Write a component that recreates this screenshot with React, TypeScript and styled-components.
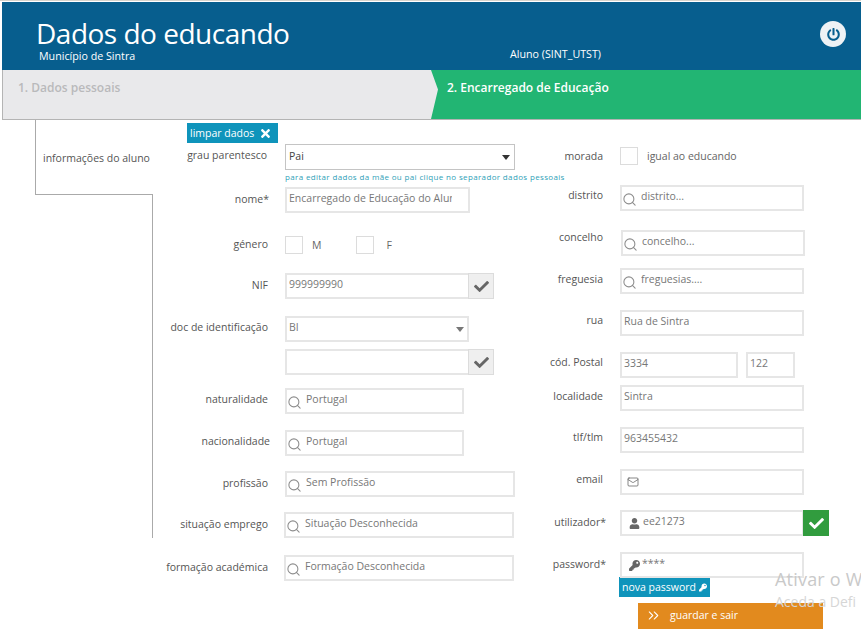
import { createGlobalStyle, styled } from 'styled-components';
import { ChevronsRight, Mail, Search } from 'lucide-react';
import { FaCheck, FaKey, FaPowerOff, FaTimes, FaUser } from 'react-icons/fa';

const Globalstyle = createGlobalStyle`
  html, body {
    margin: 0;
    padding: 0;
    height: 636px;
    overflow: hidden;
    background: #fff;
    font-family: "Open Sans", "Liberation Sans", sans-serif;
  }
  * { box-sizing: border-box; }
`;

const Page = styled.main`
  position: relative;
  width: 861px;
  height: 636px;
  overflow: hidden;
  padding: 1px 0 0 2px;
  border-top: 1px solid #d8d4cc;
`;

const Header = styled.header`
  display: flex;
  height: 68px;
  padding-left: 34px;
  background: #075e8e;
  color: #fff;
`;

const TitleBlock = styled.div`
  width: 474px;
  padding-top: 15px;
`;

const Title = styled.h1`
  margin: 0;
  font-size: 28px;
  line-height: 32px;
  font-weight: 400;
  letter-spacing: -0.5px;
`;

const Subtitle = styled.div`
  margin-left: 3px;
  font-size: 10.7px;
  line-height: 14px;
`;

const UserName = styled.div`
  align-self: flex-end;
  padding-bottom: 9px;
  font-size: 10.7px;
  line-height: 14px;
`;

const PowerButton = styled.button`
  display: flex;
  align-items: center;
  justify-content: center;
  align-self: center;
  width: 26px;
  height: 26px;
  margin: 0 15px 4px auto;
  padding: 0;
  border: none;
  border-radius: 50%;
  background: #eef2f5;
  color: #075e8e;
  font-size: 13px;
`;

const Tabs = styled.nav`
  display: flex;
  height: 50px;
  border-bottom: 1px solid #b4b4b4;
`;

const TabPessoais = styled.div`
  width: 436px;
  padding: 9px 0 0 15px;
  background: #e9e9eb;
  border-left: 1px solid #b4b4b4;
  color: #b9b9bb;
  font-size: 12px;
  line-height: 17px;
  font-weight: 600;
`;

const TabEducacao = styled.div`
  flex: 1;
  margin-left: -7px;
  padding: 9px 0 0 16px;
  background: #22b573;
  color: #fff;
  font-size: 12px;
  line-height: 17px;
  font-weight: 600;
  clip-path: polygon(0 0, 100% 0, 100% 100%, 0 100%, 7px 40%);
`;

const Content = styled.div`
  display: flex;
`;

const Sidebar = styled.aside`
  flex: none;
  width: 151px;
`;

const SideTop = styled.div`
  height: 75px;
  margin-left: 33px;
  padding: 31px 0 0 7px;
  border-left: 1px solid #aaa;
  border-bottom: 1px solid #aaa;
  color: #555;
  font-size: 10.5px;
  line-height: 15px;
  white-space: nowrap;
`;

const SideLine = styled.div`
  height: 343px;
  border-right: 1px solid #aaa;
`;

const Column = styled.section<{ $width: number }>`
  flex: none;
  width: ${(p) => p.$width}px;
  padding-top: 3px;
`;

const Row = styled.div<{ $top: number }>`
  display: flex;
  align-items: flex-start;
  margin-top: ${(p) => p.$top}px;
`;

const Label = styled.label<{ $width: number; $y?: number; $gap?: number }>`
  flex: none;
  width: ${(p) => p.$width}px;
  padding-top: ${(p) => p.$y ?? 5}px;
  margin-right: ${(p) => p.$gap ?? 17}px;
  color: #555;
  font-size: 10.5px;
  line-height: 15px;
  text-align: right;
  white-space: nowrap;
`;

const Field = styled.div<{ $width: number; $dark?: boolean; $shift?: number; $left?: number; $right?: number }>`
  display: flex;
  align-items: center;
  flex: none;
  width: ${(p) => p.$width}px;
  height: 26px;
  margin-left: ${(p) => p.$shift ?? 0}px;
  padding-left: ${(p) => p.$left ?? (p.$dark ? 3 : 2)}px;
  padding-right: ${(p) => p.$right ?? 0}px;
  border: ${(p) => (p.$dark ? '1px solid #c4c4c4' : '2px solid #e6e6e6')};
  background: #fff;
`;

const TextInput = styled.input`
  flex: 1;
  min-width: 0;
  height: 18px;
  margin-top: -5px;
  padding: 0;
  border: none;
  outline: none;
  background: transparent;
  color: #777;
  font-family: inherit;
  font-size: 10.5px;
`;

const IconSlot = styled.span<{ $width: number }>`
  display: flex;
  flex: none;
  align-items: center;
  width: ${(p) => p.$width}px;
  color: #8c8c8c;
`;

const SearchGlyph = styled(Search)`
  margin-top: 2px;
`;

const SelectValue = styled.span<{ $dark?: boolean }>`
  flex: 1;
  margin-top: ${(p) => (p.$dark ? -3 : -5)}px;
  color: ${(p) => (p.$dark ? '#444' : '#777')};
  font-size: 10.5px;
`;

const Caret = styled.span<{ $dark?: boolean }>`
  width: 0;
  height: 0;
  margin-right: ${(p) => (p.$dark ? 4 : 3)}px;
  border-left: 4px solid transparent;
  border-right: 4px solid transparent;
  border-top: 5px solid ${(p) => (p.$dark ? '#333' : '#777')};
`;

const CheckAddon = styled.span`
  display: flex;
  flex: none;
  align-items: center;
  justify-content: center;
  width: 26px;
  height: 26px;
  margin: -2px -2px -2px 0;
  border: 1px solid #dcdcdc;
  background: #efefef;
  color: #666;
  font-size: 15px;
`;

const GreenAddon = styled.span`
  display: flex;
  flex: none;
  align-items: center;
  justify-content: center;
  width: 26px;
  height: 26px;
  margin-left: -1px;
  background: #319c3e;
  color: #fff;
  font-size: 15px;
`;

const Tick = styled.span<{ $gap: number }>`
  flex: none;
  width: 18px;
  height: 18px;
  margin-right: ${(p) => p.$gap}px;
  border: 1px solid #dcdcdc;
  background: #fff;
`;

const TickText = styled.span<{ $gap?: number }>`
  margin-right: ${(p) => p.$gap ?? 0}px;
  color: #666;
  font-size: 10.5px;
  line-height: 18px;
  min-width: 0;
`;

const TealButton = styled.button<{ $shift: number; $gap: number; $top?: number }>`
  display: flex;
  align-items: center;
  gap: ${(p) => p.$gap}px;
  width: 91px;
  height: 20px;
  margin: ${(p) => p.$top ?? 0}px 0 0 ${(p) => p.$shift}px;
  padding: 0 3px;
  border: none;
  background: #0f94bb;
  color: #fff;
  font-family: inherit;
  font-size: 10.5px;
  white-space: nowrap;
`;

const Hint = styled.div`
  margin: 1px 0 0 132px;
  color: #2f9fb8;
  font-size: 8px;
  line-height: 11px;
  letter-spacing: 0.35px;
  white-space: nowrap;
`;

const SaveButton = styled.button`
  display: flex;
  align-items: center;
  gap: 8px;
  width: 185px;
  height: 26px;
  margin: 6px 0 0 118px;
  padding: 0 0 2px 7px;
  border: none;
  background: #e28a1e;
  color: #fff;
  font-family: inherit;
  font-size: 10.5px;
`;

const Watermark = styled.div`
  position: absolute;
  left: 775px;
  top: 566px;
  color: #c9c9c9;
  white-space: nowrap;
  pointer-events: none;
`;

const WatermarkTitle = styled.div`
  font-size: 18px;
  line-height: 24px;
  letter-spacing: 0.2px;
`;

const WatermarkText = styled.div`
  margin-top: 2px;
  font-size: 14px;
  line-height: 17px;
  color: #d6d6d6;
`;

const L = 115;
const R = 83;

const SearchField = ({ width, text, shift }: { width: number; text: string; shift?: number }) => (
  <Field $width={width} $shift={shift} $left={0}>
    <IconSlot $width={19}>
      <SearchGlyph size={15} strokeWidth={1.7} />
    </IconSlot>
    <TextInput readOnly defaultValue={text} />
  </Field>
);

function App() {
  return (
    <>
      <Globalstyle />
      <Page>
        <Header>
          <TitleBlock>
            <Title>Dados do educando</Title>
            <Subtitle>Município de Sintra</Subtitle>
          </TitleBlock>
          <UserName>Aluno (SINT_UTST)</UserName>
          <PowerButton aria-label="sair">
            <FaPowerOff />
          </PowerButton>
        </Header>
        <Tabs>
          <TabPessoais>1. Dados pessoais</TabPessoais>
          <TabEducacao>2. Encarregado de Educação</TabEducacao>
        </Tabs>
        <Content>
          <Sidebar>
            <SideTop>informações do aluno</SideTop>
            <SideLine />
          </Sidebar>
          <Column $width={367}>
            <TealButton $shift={34} $gap={5}>
              limpar dados <FaTimes size={13} />
            </TealButton>
            <Row $top={1}>
              <Label $width={L - 1} $gap={18} $y={4}>grau parentesco</Label>
              <Field $width={230} $dark>
                <SelectValue $dark>Pai</SelectValue>
                <Caret $dark />
              </Field>
            </Row>
            <Hint>para editar dados da mãe ou pai clique no separador dados pessoais</Hint>
            <Row $top={5}>
              <Label $width={L + 1} $gap={16}>nome*</Label>
              <Field $width={185} $right={16}>
                <TextInput readOnly defaultValue="Encarregado de Educação do Aluno" />
              </Field>
            </Row>
            <Row $top={23}>
              <Label $width={L} $y={1}>género</Label>
              <Tick $gap={9} />
              <TickText $gap={35}>M</TickText>
              <Tick $gap={12} />
              <TickText>F</TickText>
            </Row>
            <Row $top={19}>
              <Label $width={L} $y={5}>NIF</Label>
              <Field $width={209}>
                <TextInput readOnly defaultValue="999999990" />
                <CheckAddon><FaCheck /></CheckAddon>
              </Field>
            </Row>
            <Row $top={17}>
              <Label $width={L} $y={4}>doc de identificação</Label>
              <Field $width={184}>
                <SelectValue>BI</SelectValue>
                <Caret />
              </Field>
            </Row>
            <Row $top={7}>
              <Label $width={L} />
              <Field $width={209}>
                <TextInput readOnly defaultValue="" />
                <CheckAddon><FaCheck /></CheckAddon>
              </Field>
            </Row>
            <Row $top={13}>
              <Label $width={L} $y={4}>naturalidade</Label>
              <SearchField width={179} text="Portugal" />
            </Row>
            <Row $top={16}>
              <Label $width={L + 2} $gap={15} $y={4}>nacionalidade</Label>
              <SearchField width={179} text="Portugal" />
            </Row>
            <Row $top={15}>
              <Label $width={L} $y={5}>profissão</Label>
              <SearchField width={230} text="Sem Profissão" />
            </Row>
            <Row $top={15}>
              <Label $width={L} $y={5}>situação emprego</Label>
              <SearchField width={230} text="Situação Desconhecida" shift={-1} />
            </Row>
            <Row $top={17}>
              <Label $width={L} $y={5}>formação académica</Label>
              <SearchField width={230} text="Formação Desconhecida" shift={-1} />
            </Row>
          </Column>
          <Column $width={341}>
            <Row $top={24}>
              <Label $width={R} $y={2}>morada</Label>
              <Tick $gap={9} />
              <TickText>igual ao educando</TickText>
            </Row>
            <Row $top={20}>
              <Label $width={R} $y={3}>distrito</Label>
              <SearchField width={184} text="distrito..." />
            </Row>
            <Row $top={19}>
              <Label $width={R} $y={0}>concelho</Label>
              <SearchField width={184} text="concelho..." shift={1} />
            </Row>
            <Row $top={12}>
              <Label $width={R} $y={4}>freguesia</Label>
              <SearchField width={184} text="freguesias...." />
            </Row>
            <Row $top={16}>
              <Label $width={R} $y={3}>rua</Label>
              <Field $width={184}>
                <TextInput readOnly defaultValue="Rua de Sintra" />
              </Field>
            </Row>
            <Row $top={16}>
              <Label $width={R} $y={3}>cód. Postal</Label>
              <Field $width={118}>
                <TextInput readOnly defaultValue="3334" />
              </Field>
              <Field $width={49} $shift={8}>
                <TextInput readOnly defaultValue="122" />
              </Field>
            </Row>
            <Row $top={7}>
              <Label $width={R} $y={4}>localidade</Label>
              <Field $width={184}>
                <TextInput readOnly defaultValue="Sintra" />
              </Field>
            </Row>
            <Row $top={16}>
              <Label $width={R} $y={3}>tlf/tlm</Label>
              <Field $width={184}>
                <TextInput readOnly defaultValue="963455432" />
              </Field>
            </Row>
            <Row $top={16}>
              <Label $width={R} $y={3}>email</Label>
              <Field $width={184} $left={5}>
                <IconSlot $width={17}>
                  <Mail size={12} strokeWidth={1.4} color="#555" />
                </IconSlot>
              </Field>
            </Row>
            <Row $top={15}>
              <Label $width={R + 3} $gap={14} $y={5}>utilizador*</Label>
              <Field $width={184} $left={7}>
                <IconSlot $width={14}>
                  <FaUser size={11} color="#666" />
                </IconSlot>
                <TextInput readOnly defaultValue="ee21273" />
              </Field>
              <GreenAddon><FaCheck /></GreenAddon>
            </Row>
            <Row $top={16}>
              <Label $width={R + 3} $gap={14} $y={5}>password*</Label>
              <Field $width={184} $left={7}>
                <IconSlot $width={13}>
                  <FaKey size={11} color="#666" />
                </IconSlot>
                <TextInput readOnly defaultValue="****" />
              </Field>
            </Row>
            <TealButton $shift={99} $gap={3} $top={-1}>
              nova password <FaKey size={9} />
            </TealButton>
            <SaveButton>
              <ChevronsRight size={17} strokeWidth={1.5} />
              guardar e sair
            </SaveButton>
          </Column>
        </Content>
        <Watermark>
          <WatermarkTitle>Ativar o W</WatermarkTitle>
          <WatermarkText>Aceda a Defi</WatermarkText>
        </Watermark>
      </Page>
    </>
  );
}

export default App;
